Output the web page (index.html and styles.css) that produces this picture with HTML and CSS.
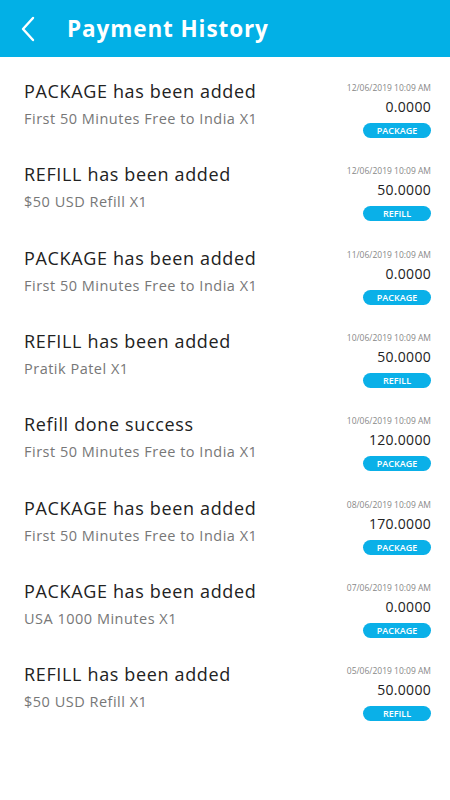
FILE: index.html
```html
<!DOCTYPE html>
<html lang="en">
<head>
    <meta charset="UTF-8">
    <meta name="viewport" content="width=device-width, initial-scale=1.0">
    <title>Payment History</title>
    <link rel="stylesheet" href="styles.css">
</head>
<body>
    <div class="topbar">
        <svg class="back" width="16" height="26" viewBox="0 0 16 26">
            <path d="M13 2 L3 13 L13 24" fill="none" stroke="#fff" stroke-width="2.4" stroke-linecap="round" stroke-linejoin="round"/>
        </svg>
        <h1>Payment History</h1>
    </div>

    <ul class="history">
        <li class="item">
            <div class="info">
                <p class="title">PACKAGE has been added</p>
                <p class="desc">First 50 Minutes Free to India X1</p>
            </div>
            <div class="meta">
                <span class="date">12/06/2019 10:09 AM</span>
                <span class="amount">0.0000</span>
                <span class="badge">PACKAGE</span>
            </div>
        </li>
        <li class="item">
            <div class="info">
                <p class="title">REFILL has been added</p>
                <p class="desc">$50 USD Refill X1</p>
            </div>
            <div class="meta">
                <span class="date">12/06/2019 10:09 AM</span>
                <span class="amount">50.0000</span>
                <span class="badge">REFILL</span>
            </div>
        </li>
        <li class="item">
            <div class="info">
                <p class="title">PACKAGE has been added</p>
                <p class="desc">First 50 Minutes Free to India X1</p>
            </div>
            <div class="meta">
                <span class="date">11/06/2019 10:09 AM</span>
                <span class="amount">0.0000</span>
                <span class="badge">PACKAGE</span>
            </div>
        </li>
        <li class="item">
            <div class="info">
                <p class="title">REFILL has been added</p>
                <p class="desc">Pratik Patel X1</p>
            </div>
            <div class="meta">
                <span class="date">10/06/2019 10:09 AM</span>
                <span class="amount">50.0000</span>
                <span class="badge">REFILL</span>
            </div>
        </li>
        <li class="item">
            <div class="info">
                <p class="title">Refill done success</p>
                <p class="desc">First 50 Minutes Free to India X1</p>
            </div>
            <div class="meta">
                <span class="date">10/06/2019 10:09 AM</span>
                <span class="amount">120.0000</span>
                <span class="badge">PACKAGE</span>
            </div>
        </li>
        <li class="item">
            <div class="info">
                <p class="title">PACKAGE has been added</p>
                <p class="desc">First 50 Minutes Free to India X1</p>
            </div>
            <div class="meta">
                <span class="date">08/06/2019 10:09 AM</span>
                <span class="amount">170.0000</span>
                <span class="badge">PACKAGE</span>
            </div>
        </li>
        <li class="item">
            <div class="info">
                <p class="title">PACKAGE has been added</p>
                <p class="desc">USA 1000 Minutes X1</p>
            </div>
            <div class="meta">
                <span class="date">07/06/2019 10:09 AM</span>
                <span class="amount">0.0000</span>
                <span class="badge">PACKAGE</span>
            </div>
        </li>
        <li class="item">
            <div class="info">
                <p class="title">REFILL has been added</p>
                <p class="desc">$50 USD Refill X1</p>
            </div>
            <div class="meta">
                <span class="date">05/06/2019 10:09 AM</span>
                <span class="amount">50.0000</span>
                <span class="badge">REFILL</span>
            </div>
        </li>
    </ul>
</body>
</html>
```

FILE: styles.css
```css
body {
    margin: 0;
    background: #fff;
    font-family: 'Open Sans', 'Noto Sans', sans-serif;
    color: #222;
}

.topbar {
    height: 57px;
    background-color: #02b0e6;
    display: flex;
    align-items: center;
    padding-left: 20px;
}

.back {
    margin-right: 31px;
}

.topbar h1 {
    margin: 0;
    color: #fff;
    font-size: 22.5px;
    font-weight: 700;
    letter-spacing: 0.9px;
}

.history {
    list-style: none;
    margin: 0;
    padding: 0 19px 0 24px;
}

.item {
    height: 83.33px;
    box-sizing: border-box;
    padding-top: 22px;
    display: flex;
    justify-content: space-between;
}

.info p {
    margin: 0;
}

.title {
    font-size: 18px;
    line-height: 24px;
    color: #222;
    letter-spacing: 0.65px;
}

.desc {
    font-size: 14.5px;
    line-height: 24px;
    margin-top: 4px !important;
    color: #777;
    letter-spacing: 0.5px;
}

.meta {
    display: flex;
    flex-direction: column;
    align-items: flex-end;
}

.date {
    margin-top: 2px;
    font-size: 8.5px;
    line-height: 14px;
    color: #888;
}

.amount {
    margin-top: 2px;
    font-size: 14px;
    line-height: 20px;
    color: #222;
    letter-spacing: 0.3px;
}

.badge {
    margin-top: 6px;
    width: 68px;
    height: 15px;
    border-radius: 8px;
    background-color: #0ab0e8;
    color: #fff;
    font-size: 9px;
    font-weight: 600;
    line-height: 15px;
    text-align: center;
}
```
